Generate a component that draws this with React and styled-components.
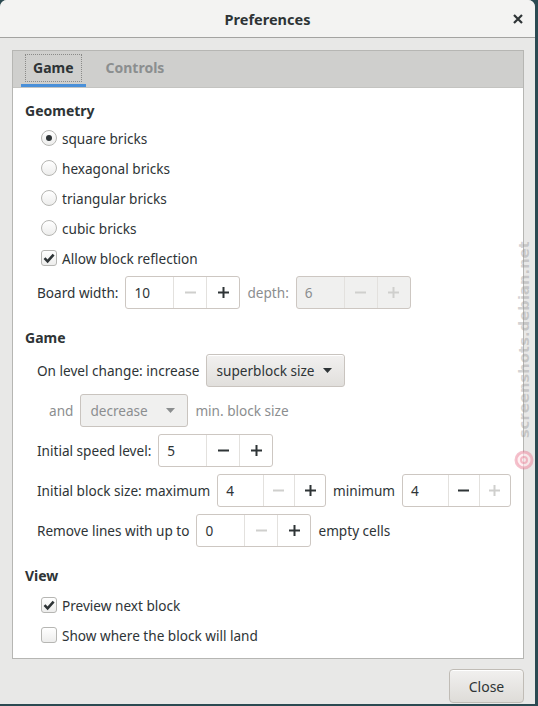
import React from 'react';
import styled, { createGlobalStyle } from 'styled-components';

const Global = createGlobalStyle`
  html, body { margin: 0; padding: 0; background: #2b4a52; }
  body {
    font-family: "Noto Sans", "Open Sans", sans-serif;
    font-size: 13.6px;
    color: #2e3436;
  }
  #root { width: 538px; height: 706px; }
  * { box-sizing: border-box; }
`;

const Window = styled.div`
  position: relative;
  width: 535px;
  height: 704px;
  background: #e8e8e7;
  border-radius: 7px 7px 0 0;
  display: flex;
  flex-direction: column;
  overflow: hidden;
`;

const TitleBar = styled.header`
  flex: none;
  height: 38px;
  display: grid;
  grid-template-columns: 1fr auto 1fr;
  align-items: center;
  background: #f3f3f2;
  border-bottom: 1px solid #a3a3a1;
`;

const Title = styled.div`
  grid-column: 2;
  font-weight: bold;
  font-size: 14.5px;
  color: #2e3436;
`;

const CloseX = styled.div`
  grid-column: 3;
  justify-self: end;
  margin-right: 12px;
  display: flex;
  align-items: center;
`;

const Body = styled.div`
  flex: 1;
  display: flex;
  flex-direction: column;
  padding: 12px 11px 1px 12px;
  min-height: 0;
`;

const Notebook = styled.div`
  flex: 1;
  min-height: 0;
  overflow: hidden;
  display: flex;
  flex-direction: column;
  border: 1px solid #b6b6b3;
  background: #fff;
`;

const TabBar = styled.div`
  flex: none;
  height: 37px;
  display: flex;
  gap: 8px;
  padding-left: 8px;
  background: #cfcfcd;
  border-bottom: 1px solid #c4c4c1;
`;

const Tab = styled.div`
  display: flex;
  align-items: center;
  padding: 0 4px;
  border-bottom: 3px solid ${p => (p.$active ? '#4a90d9' : 'transparent')};
  color: ${p => (p.$active ? '#2e3436' : '#8b8e8f')};
  font-weight: bold;
  font-size: 14px;
`;

const TabLabel = styled.span`
  padding: 3px 7px 4px;
  border: 1px dotted ${p => (p.$focus ? '#8a8a88' : 'transparent')};
`;

const Content = styled.div`
  flex: 1;
  display: flex;
  flex-direction: column;
  padding: 13px 12px 12px;
`;

const Heading = styled.div`
  height: 20px;
  line-height: 20px;
  font-weight: bold;
  font-size: 14px;
  margin-top: ${p => p.$mt || 0}px;
  margin-bottom: ${p => p.$mb || 0}px;
`;

const OptionRow = styled.label`
  height: 30px;
  display: flex;
  align-items: center;
  gap: 5px;
  padding-left: 16px;
`;

const RadioCircle = styled.span`
  width: 16px;
  height: 16px;
  border-radius: 50%;
  border: 1px solid #b6b6b3;
  background: linear-gradient(#ffffff, #ededec);
  display: flex;
  align-items: center;
  justify-content: center;
  &::after {
    content: '';
    width: 6px;
    height: 6px;
    border-radius: 50%;
    background: #2e3436;
    display: ${p => (p.$checked ? 'block' : 'none')};
  }
`;

const CheckBox = styled.span`
  width: 16px;
  height: 16px;
  border-radius: 3px;
  border: 1px solid #b6b6b3;
  background: linear-gradient(#ffffff, #ededec);
  display: flex;
  align-items: center;
  justify-content: center;
`;

const FormRow = styled.div`
  display: flex;
  align-items: center;
  gap: 7px;
  padding-left: ${p => p.$indent ?? 12}px;
  margin-top: ${p => p.$mt || 0}px;
`;

const Label = styled.span`
  color: ${p => (p.$dim ? '#8b8e8f' : '#2e3436')};
  white-space: nowrap;
`;

const SpinBox = styled.div`
  display: flex;
  height: 33px;
  border: 1px solid #cdc7c2;
  border-radius: 3px;
  background: ${p => (p.$disabled ? '#f0f0ef' : '#fff')};
  overflow: hidden;
`;

const SpinEntry = styled.div`
  width: 47px;
  padding-left: 8px;
  display: flex;
  align-items: center;
  color: ${p => (p.$disabled ? '#8b8e8f' : '#2e3436')};
`;

const SpinButton = styled.div`
  width: 33px;
  display: flex;
  align-items: center;
  justify-content: center;
  border-left: 1px solid #e3e1de;
  color: ${p => (p.$disabled ? '#cfcfcd' : '#2e3436')};
`;

const DropButton = styled.div`
  height: 33px;
  display: flex;
  align-items: center;
  gap: 8px;
  padding: 0 12px 0 9px;
  border: 1px solid #c9c4bf;
  border-radius: 3px;
  background: ${p => (p.$disabled ? '#f0f0ef' : 'linear-gradient(#f2f1f0, #e1dfdc)')};
  color: ${p => (p.$disabled ? '#8b8e8f' : '#2e3436')};
  box-shadow: ${p => (p.$disabled ? 'none' : 'inset 0 1px #fff')};
`;

const DropText = styled.span`
  min-width: ${p => p.$min || 0}px;
`;

const Footer = styled.div`
  flex: none;
  display: flex;
  justify-content: flex-end;
  margin-top: 10px;
`;

const CloseButton = styled.button`
  width: 75px;
  height: 34px;
  font: inherit;
  font-size: 14px;
  color: #2e3436;
  border: 1px solid #c0bcb6;
  border-radius: 4px;
  background: linear-gradient(#f1f0ef, #dedcd8);
  box-shadow: inset 0 1px #fff;
`;

const Watermark = styled.div`
  position: absolute;
  right: 1px;
  top: 241px;
  display: flex;
  flex-direction: column;
  align-items: center;
  gap: 12px;
  pointer-events: none;
`;

const WatermarkText = styled.span`
  writing-mode: vertical-rl;
  transform: rotate(180deg);
  font-family: "DejaVu Sans", sans-serif;
  font-weight: bold;
  font-size: 14.5px;
  letter-spacing: 0.2px;
  color: rgba(150, 150, 150, 0.42);
`;

const Minus = () => (
  <svg width="11" height="11" viewBox="0 0 11 11">
    <rect x="0" y="4.5" width="11" height="2" fill="currentColor" />
  </svg>
);
const Plus = () => (
  <svg width="11" height="11" viewBox="0 0 11 11">
    <rect x="0" y="4.5" width="11" height="2" fill="currentColor" />
    <rect x="4.5" y="0" width="2" height="11" fill="currentColor" />
  </svg>
);
const Arrow = () => (
  <svg width="9" height="5" viewBox="0 0 9 5">
    <path d="M0 0 H9 L4.5 5 Z" fill="currentColor" />
  </svg>
);
const Check = () => (
  <svg width="12" height="12" viewBox="0 0 12 12">
    <path d="M1.5 6.2 L4.6 9.3 L10.6 2.6" fill="none" stroke="#2e3436" strokeWidth="2.6" strokeLinejoin="miter" />
  </svg>
);

const Spin = ({ value, minusOff, plusOff, disabled }) => (
  <SpinBox $disabled={disabled}>
    <SpinEntry $disabled={disabled}>{value}</SpinEntry>
    <SpinButton $disabled={disabled || minusOff}><Minus /></SpinButton>
    <SpinButton $disabled={disabled || plusOff}><Plus /></SpinButton>
  </SpinBox>
);

const Radio = ({ checked, children }) => (
  <OptionRow>
    <RadioCircle $checked={checked} />
    <span>{children}</span>
  </OptionRow>
);

const Checkbox = ({ checked, children }) => (
  <OptionRow>
    <CheckBox>{checked && <Check />}</CheckBox>
    <span>{children}</span>
  </OptionRow>
);

export default function App() {
  return (
    <>
      <Global />
      <Window>
        <TitleBar>
          <Title>Preferences</Title>
          <CloseX>
            <svg width="10" height="10" viewBox="0 0 10 10">
              <path d="M1 1 L9 9 M9 1 L1 9" stroke="#2e3436" strokeWidth="2.2" />
            </svg>
          </CloseX>
        </TitleBar>
        <Body>
          <Notebook>
            <TabBar>
              <Tab $active><TabLabel $focus>Game</TabLabel></Tab>
              <Tab><TabLabel>Controls</TabLabel></Tab>
            </TabBar>
            <Content>
              <Heading $mb={2}>Geometry</Heading>
              <Radio checked>square bricks</Radio>
              <Radio>hexagonal bricks</Radio>
              <Radio>triangular bricks</Radio>
              <Radio>cubic bricks</Radio>
              <Checkbox checked>Allow block reflection</Checkbox>
              <FormRow $mt={3}>
                <Label>Board width:</Label>
                <Spin value="10" minusOff />
                <Label $dim>depth:</Label>
                <Spin value="6" disabled />
              </FormRow>

              <Heading $mt={19} $mb={6}>Game</Heading>
              <FormRow>
                <Label>On level change: increase</Label>
                <DropButton>
                  <DropText>superblock size</DropText>
                  <Arrow />
                </DropButton>
              </FormRow>
              <FormRow $indent={24} $mt={7}>
                <Label $dim>and</Label>
                <DropButton $disabled>
                  <DropText $min={68}>decrease</DropText>
                  <Arrow />
                </DropButton>
                <Label $dim>min. block size</Label>
              </FormRow>
              <FormRow $mt={7}>
                <Label>Initial speed level:</Label>
                <Spin value="5" />
              </FormRow>
              <FormRow $mt={7}>
                <Label>Initial block size: maximum</Label>
                <Spin value="4" minusOff />
                <Label>minimum</Label>
                <Spin value="4" plusOff />
              </FormRow>
              <FormRow $mt={7}>
                <Label>Remove lines with up to</Label>
                <Spin value="0" minusOff />
                <Label>empty cells</Label>
              </FormRow>

              <Heading $mt={19} $mb={4}>View</Heading>
              <Checkbox checked>Preview next block</Checkbox>
              <Checkbox>Show where the block will land</Checkbox>
            </Content>
          </Notebook>
          <Footer>
            <CloseButton>Close</CloseButton>
          </Footer>
        </Body>
        <Watermark>
          <WatermarkText>screenshots.debian.net</WatermarkText>
          <svg width="20" height="20" viewBox="0 0 20 20">
            <circle cx="10" cy="10" r="8" fill="rgba(255,230,235,0.6)" stroke="rgba(230,120,145,0.45)" strokeWidth="3" />
            <circle cx="10" cy="10" r="3" fill="none" stroke="rgba(230,120,145,0.45)" strokeWidth="2" />
          </svg>
        </Watermark>
      </Window>
    </>
  );
}
